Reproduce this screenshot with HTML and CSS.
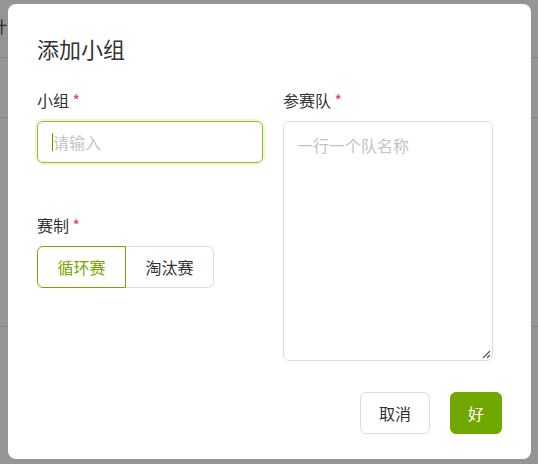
FILE: index.html
```html
<!DOCTYPE html>
<html lang="zh">
<head>
<meta charset="utf-8">
<link rel="stylesheet" href="styles.css">
</head>
<body>
<div class="page">
  <div class="page-row r1"><span class="page-text">计</span></div>
  <div class="page-row r2"></div>
  <div class="page-row r3"></div>
</div>
<div class="overlay">
  <div class="dialog">
    <h2 class="title">添加小组</h2>
    <div class="cols">
      <div class="col-left">
        <div class="field">
          <label class="label">小组 <span class="req">*</span></label>
          <div class="input focused"><span class="caret"></span><span class="ph">请输入</span></div>
        </div>
        <div class="field field-mode">
          <label class="label">赛制 <span class="req">*</span></label>
          <div class="seg">
            <div class="seg-btn active">循环赛</div>
            <div class="seg-btn">淘汰赛</div>
          </div>
        </div>
      </div>
      <div class="col-right">
        <label class="label">参赛队 <span class="req">*</span></label>
        <div class="textarea">
          <span class="ph">一行一个队名称</span>
          <svg class="grip" width="10" height="10" viewBox="0 0 10 10"><path d="M9 2 L2 9 M9 6 L6 9" stroke="#555" stroke-width="1.2" fill="none"/></svg>
        </div>
      </div>
    </div>
    <div class="footer">
      <button class="btn btn-cancel">取消</button>
      <button class="btn btn-ok">好</button>
    </div>
  </div>
</div>
</body>
</html>
```

FILE: styles.css
```css
* { box-sizing: border-box; }
html, body { margin: 0; padding: 0; }
body {
  width: 538px;
  height: 464px;
  overflow: hidden;
  font-family: "Noto Sans CJK SC", "Noto Sans", sans-serif;
  background: #fff;
  position: relative;
}
.page { width: 538px; }
.page-row { border-bottom: 1px solid #e4e4e4; }
.r1 { height: 58px; padding-top: 14px; }
.r2 { height: 60px; }
.r3 { height: 209px; }
.page-text {
  display: inline-block;
  margin-left: -9px;
  font-size: 16px;
  color: #3a4a66;
}
.overlay {
  position: absolute;
  inset: 0;
  background: rgba(0, 0, 0, 0.415);
  padding: 4px 7px 5px 8px;
}
.dialog {
  width: 523px;
  height: 455px;
  background: #fff;
  border-radius: 8px;
  padding: 29px 29px 0 29px;
  color: #333;
}
.title {
  margin: 0;
  font-size: 22px;
  font-weight: 400;
  line-height: 30px;
  color: #333;
}
.cols {
  display: flex;
  gap: 20px;
  margin-top: 26px;
}
.col-left { width: 226px; }
.col-right { width: 210px; }
.label {
  display: block;
  font-size: 16px;
  line-height: 22px;
  height: 22px;
  color: #333;
}
.req { color: #e0405e; }
.input {
  margin-top: 10px;
  height: 42px;
  border: 1px solid #8cc21f;
  border-radius: 6px;
  box-shadow: 0 0 0 2px #eef6dc;
  display: flex;
  align-items: center;
  padding-left: 14px;
  font-size: 16px;
}
.caret {
  width: 1px;
  height: 18px;
  background: #5a9a00;
}
.ph { color: #c4c4c4; font-size: 16px; }
.field-mode { margin-top: 51px; }
.seg {
  margin-top: 10px;
  display: flex;
}
.seg-btn {
  height: 42px;
  display: flex;
  align-items: center;
  justify-content: center;
  font-size: 16px;
  color: #333;
  border: 1px solid #dcdde2;
}
.seg-btn:first-child {
  width: 89px;
  border-radius: 6px 0 0 6px;
}
.seg-btn:last-child {
  width: 88px;
  border-left: none;
  border-radius: 0 6px 6px 0;
}
.seg-btn.active {
  border-color: #72a800;
  color: #72a800;
}
.textarea {
  margin-top: 10px;
  height: 240px;
  border: 1px solid #dcdde2;
  border-radius: 6px;
  padding: 11px 13px;
  position: relative;
}
.grip {
  position: absolute;
  right: 1px;
  bottom: 1px;
}
.footer {
  display: flex;
  justify-content: flex-end;
  gap: 20px;
  margin-top: 31px;
}
.btn {
  height: 42px;
  font-family: inherit;
  font-size: 16px;
  border-radius: 6px;
  cursor: pointer;
}
.btn-cancel {
  width: 70px;
  background: #fff;
  border: 1px solid #dcdde2;
  color: #333;
}
.btn-ok {
  width: 52px;
  background: #70a800;
  border: 1px solid #70a800;
  color: #fff;
}
```
